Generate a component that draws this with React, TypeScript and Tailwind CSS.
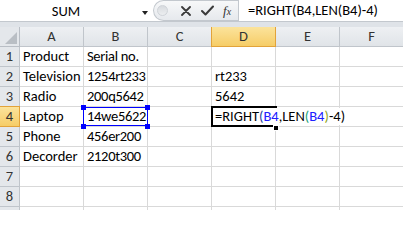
const cols = ['A', 'B', 'C', 'D', 'E', 'F'];

const rows: string[][] = [
  ['Product', 'Serial no.', '', '', '', ''],
  ['Television', '1254rt233', '', 'rt233', '', ''],
  ['Radio', '200q5642', '', '5642', '', ''],
  ['Laptop', '', '', '', '', ''],
  ['Phone', '456er200', '', '', '', ''],
  ['Decorder', '2120t300', '', '', '', ''],
  ['', '', '', '', '', ''],
  ['', '', '', '', '', ''],
  ['', '', '', '', '', ''],
];

function Handle({ className }: { className: string }) {
  return <span className={`absolute w-[5px] h-[5px] bg-[#0000ff] ${className}`} />;
}

function FormulaText() {
  return (
    <>
      =RIGHT<span className="text-[#1f3f9f]">(</span>
      <span className="text-[#2020ff]">B4</span>,LEN
      <span className="text-[#1aa37a]">(</span>
      <span className="text-[#2020ff]">B4</span>
      <span className="text-[#8fa31a]">)</span>-4)
    </>
  );
}

export default function App() {
  return (
    <div className="w-[403px] h-[210px] overflow-hidden bg-white font-[Carlito,Lato,sans-serif] text-[14.5px] text-black">
      {/* formula bar */}
      <div className="flex h-[22px] border-b border-[#c3c8ce] bg-white">
        <div className="relative w-[153px] flex items-center">
          <span className="w-[132px] text-center leading-none pt-[1px]">SUM</span>
          <span className="absolute left-[142px] top-[11px] w-0 h-0 border-l-[3px] border-r-[3px] border-t-[4px] border-l-transparent border-r-transparent border-t-[#222]" />
        </div>
        <div className="w-[85px] flex items-center rounded-l-[11px] border border-r-0 border-[#c3c8ce] bg-gradient-to-b from-[#f7f8f9] to-[#e6e9ed]">
          <span className="ml-[3px] w-[11px] h-[11px] rounded-full bg-gradient-to-b from-[#d8dbdf] to-[#eceef0] border border-[#cfd3d8]" />
          <svg className="ml-[13px]" width="10" height="10" viewBox="0 0 10 10">
            <path d="M1 1 L9 9 M9 1 L1 9" stroke="#3a3a3a" strokeWidth="1.8" strokeLinecap="round" />
          </svg>
          <svg className="ml-[10px]" width="13" height="11" viewBox="0 0 13 11">
            <path d="M1 6 L4.5 9.5 L12 1.5" stroke="#3a3a3a" strokeWidth="2" fill="none" strokeLinecap="round" strokeLinejoin="round" />
          </svg>
          <span className="ml-[9px] font-['Liberation_Serif',serif] italic text-[13px] text-[#333] leading-none">
            f<span className="text-[10px]">x</span>
          </span>
        </div>
        <div className="flex-1 flex items-center border-l border-[#c3c8ce] pl-[9px] whitespace-nowrap pt-[1px]">
          =RIGHT(B4,LEN(B4)-4)
        </div>
      </div>
      <div className="h-[5px] bg-[#dfe3e8]" />

      {/* sheet */}
      <div className="grid grid-cols-[20px_repeat(6,64px)] auto-rows-[20px]">
        <div className="relative bg-[#e4e7eb] border-r border-b border-[#b9bec5]">
          <svg className="absolute left-[5px] top-[5px]" width="12" height="12" viewBox="0 0 12 12">
            <path d="M12 0 L12 12 L0 12 Z" fill="#b9bec4" />
          </svg>
        </div>
        {cols.map((c) =>
          c === 'D' ? (
            <div
              key={c}
              className="flex items-center justify-center bg-gradient-to-b from-[#fbe39b] to-[#f6cd66] border-l border-r border-b border-[#e2a33a] -ml-[1px] text-[#333]"
            >
              {c}
            </div>
          ) : (
            <div
              key={c}
              className="flex items-center justify-center bg-gradient-to-b from-[#eef0f3] to-[#e0e4e8] border-r border-b border-[#c0c5cb] text-[#333]"
            >
              {c}
            </div>
          )
        )}

        {rows.map((r, i) => {
          const n = i + 1;
          return [
            <div
              key={`h${n}`}
              className={
                n === 4
                  ? 'flex items-center justify-center bg-gradient-to-b from-[#fbe39b] to-[#f6cd66] border-r border-b border-t border-[#e2a33a] -mt-[1px] text-[#333]'
                  : 'flex items-center justify-center bg-[#e4e7eb] border-r border-b border-[#c0c5cb] text-[#333]'
              }
            >
              {n < 9 ? n : ''}
            </div>,
            ...r.map((v, j) => {
              const key = `${n}${cols[j]}`;
              if (n === 4 && j === 1) {
                return (
                  <div key={key} className="relative border-r border-b border-[#d9d9d9] flex items-center pl-[3px] pt-[1px] tracking-[-0.3px]">
                    14we5622
                    <span className="absolute -left-[1px] top-0 w-[65px] h-[19px] border border-[#0000ff]" />
                    <Handle className="-left-[3px] -top-[2px]" />
                    <Handle className="left-[61px] -top-[2px]" />
                    <Handle className="-left-[3px] top-[17px]" />
                    <Handle className="left-[61px] top-[17px]" />
                  </div>
                );
              }
              if (n === 4 && j === 3) {
                return (
                  <div key={key} className="relative border-r border-b border-[#d9d9d9]">
                    <span className="absolute left-[1px] top-[1px] h-[17px] z-10 bg-white whitespace-nowrap pr-[3px] pl-[2px] flex items-center pt-[1px]">
                      <FormulaText />
                    </span>
                    <span className="absolute -left-[1px] -top-[1px] w-[66px] h-[21px] border-2 border-r-0 border-black z-20" />
                    <span className="absolute left-[61px] top-[18px] w-[6px] h-[6px] bg-black border border-white z-30" />
                  </div>
                );
              }
              return (
                <div
                  key={key}
                  className={`overflow-hidden whitespace-nowrap border-r border-b border-[#d9d9d9] flex items-center pl-[3px] pt-[1px] ${j === 1 ? 'tracking-[-0.3px]' : ''}`}
                >
                  {v}
                </div>
              );
            }),
          ];
        })}
      </div>
    </div>
  );
}
